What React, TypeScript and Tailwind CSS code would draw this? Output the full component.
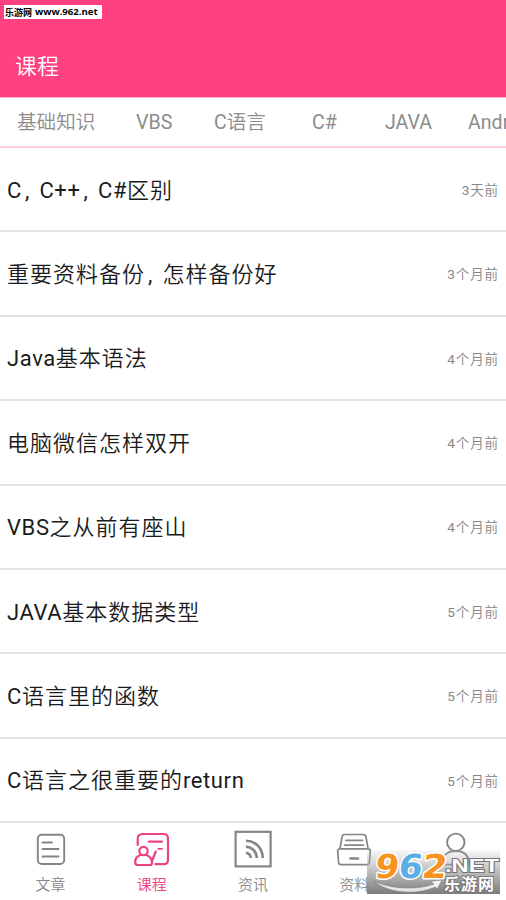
import React from "react";

const tabs = [
  { name: "基础知识", pos: "ml-[17px] w-[119px]" },
  { name: "VBS", pos: "w-[78px]" },
  { name: "C语言", pos: "w-[98px]" },
  { name: "C#", pos: "w-[73px]" },
  { name: "JAVA", pos: "w-[83px]" },
  { name: "Android", pos: "w-[80px]" },
];

const lessons = [
  ["C，C++，C#区别", "3天前"],
  ["重要资料备份，怎样备份好", "3个月前"],
  ["Java基本语法", "4个月前"],
  ["电脑微信怎样双开", "4个月前"],
  ["VBS之从前有座山", "4个月前"],
  ["JAVA基本数据类型", "5个月前"],
  ["C语言里的函数", "5个月前"],
  ["C语言之很重要的return", "5个月前"],
];

/* Latin runs use the regular weight, Chinese runs a slightly lighter one. */
function Mixed({ text }: { text: string }) {
  const parts = text.match(/[A-Za-z0-9#]+|[^A-Za-z0-9#]+/g) ?? [];
  return (
    <>
      {parts.map((part, i) => (
        <span key={i} className={/^[A-Za-z0-9#]/.test(part) ? "font-normal" : "font-[350]"}>{part}</span>
      ))}
    </>
  );
}

function Title({ text }: { text: string }) {
  const parts = text.match(/，|[A-Za-z+#]+|[^A-Za-z+#，]+/g) ?? [];
  return (
    <span className="flex items-baseline whitespace-nowrap pt-[3px] text-[22px] leading-8 text-[#1b1b1b]">
      {parts.map((part, i) =>
        part === "，" ? (
          <span key={i} className="w-[17.5px] pl-[3px]">,</span>
        ) : /^[A-Za-z+#]/.test(part) ? (
          <span key={i} className="tracking-[0.6px]">{part}</span>
        ) : (
          <span key={i} className="font-[350] tracking-[1px]">{part}</span>
        ),
      )}
    </span>
  );
}

function ArticleIcon() {
  return (
    <svg width="38" height="38" viewBox="0 0 38 38" fill="none" stroke="#858585" strokeWidth="1.9" strokeLinecap="round">
      <rect x="5.8" y="4.8" width="26.4" height="29.2" rx="4" />
      <path d="M10.5 12.5H20M10.5 19H26.5M10.5 26.5H26.5" />
    </svg>
  );
}

function CourseIcon() {
  return (
    <svg width="38" height="38" viewBox="0 0 38 38" fill="none" stroke="#ed4185" strokeWidth="2.2" strokeLinecap="round">
      <path d="M4.7 15V9Q4.7 4 9.5 4H30.5Q35 4 35 8.5V30Q35 34.2 30.5 34.2H22.5" />
      <path d="M15.8 11.6H29" />
      <path d="M25.2 18.8H29" strokeWidth="1.8" />
      <path d="M22.8 21.5L19 31" />
      <circle cx="10.5" cy="21" r="4.2" />
      <path d="M7.5 25C3.2 26.5 2 29.5 2.2 32.5Q2.3 35 4.8 35H16.8Q19.2 35 19 32C18.7 28.5 17 26.5 13.5 25" />
    </svg>
  );
}

function FeedIcon() {
  return (
    <svg width="38" height="38" viewBox="0 0 38 38" fill="none" stroke="#858585">
      <rect x="1.6" y="1.8" width="35" height="34.6" strokeWidth="2.2" />
      <path d="M12 10.7C22 11 28.5 18.5 28.8 28M12 16.7C18 17 22.5 21.5 22.8 28M12 22.7Q16.4 23.3 16.8 28" strokeWidth="2.6" />
    </svg>
  );
}

function DrawerIcon() {
  return (
    <svg width="38" height="38" viewBox="0 0 38 38" fill="none" stroke="#858585" strokeWidth="1.7" strokeLinecap="round" strokeLinejoin="round">
      <path d="M5 18.5L7 7Q7.4 4.5 9.5 4.5H28.5Q30.6 4.5 31 7L33 18.5" />
      <path d="M11 10.4H27.5M9.5 15.2H28.5" />
      <path d="M5 18.9H33Q35.5 18.9 35.3 21.3L34.4 32.5Q34.2 34.6 31.7 34.6H6.3Q3.8 34.6 3.6 32.5L2.7 21.3Q2.5 18.9 5 18.9Z" />
      <path d="M15.5 28.4H23" strokeWidth="2.5" />
    </svg>
  );
}

function PersonIcon() {
  return (
    <svg width="38" height="38" viewBox="0 0 38 38" fill="none" stroke="#858585" strokeWidth="1.9" strokeLinecap="round">
      <circle cx="19.8" cy="12.3" r="8.7" />
      <path d="M6 34.6C6 25 12 21 19.8 21S33 25 33 34.6Z" />
    </svg>
  );
}

const navigation = [
  { name: "文章", icon: <ArticleIcon /> },
  { name: "课程", icon: <CourseIcon />, active: true },
  { name: "资讯", icon: <FeedIcon /> },
  { name: "资料", icon: <DrawerIcon /> },
  { name: "我的", icon: <PersonIcon /> },
];

function Watermark() {
  return (
    <div className="absolute bottom-[6px] right-[6px] h-[44px] w-[133px] bg-linear-to-b from-[#bbbbbb]/10 via-[#a8a8a8]/75 via-50% to-[#7c7c7c]">
      <svg className="overflow-visible" width="133" height="44" viewBox="0 0 133 44">
        <defs>
          <linearGradient id="swoosh" x1="0" x2="0" y1="0" y2="1">
            <stop offset="0" stopColor="#ffffff" />
            <stop offset="1" stopColor="#dddddd" />
          </linearGradient>
        </defs>
        <g transform="translate(0 28) skewX(-7)" fontFamily="DejaVu Sans, sans-serif" fontWeight="700" fontSize="33" stroke="#fff" strokeWidth="3" paintOrder="stroke" strokeLinejoin="round">
          <text x="7" y="0" fill="#f7941e" textLength="24" lengthAdjust="spacingAndGlyphs">9</text>
          <text x="30.5" y="0" fill="#5aaee3" textLength="24" lengthAdjust="spacingAndGlyphs">6</text>
          <text x="54" y="0" fill="#f7941e" textLength="25" lengthAdjust="spacingAndGlyphs">2</text>
        </g>
        <path d="M7 31C20 38 48 41 67 34L63 31.5L75 30L70 39.5L68.5 37C48 46 20 43 7 31Z" fill="url(#swoosh)" stroke="#777" strokeWidth="0.6" />
        <g fill="#fff" stroke="#777" strokeWidth="2" paintOrder="stroke" fontWeight="700">
          <text x="78" y="22" fontSize="19" fontFamily="Liberation Sans, sans-serif" textLength="54" lengthAdjust="spacingAndGlyphs">.NET</text>
          <text x="77" y="40" fontSize="16" fontFamily="Noto Sans CJK SC, sans-serif" textLength="50">乐游网</text>
        </g>
      </svg>
    </div>
  );
}

export default function App() {
  return (
    <main className="relative flex h-[900px] w-[506px] flex-col overflow-hidden bg-white font-['Roboto','Noto_Sans_CJK_SC',sans-serif]">
      <header className="flex h-[97px] shrink-0 flex-col bg-[#ff4081]">
        <div className="ml-1 mt-[5px] flex h-[14px] w-[98px] items-center whitespace-nowrap bg-white pl-px pt-px font-['Noto_Sans','Noto_Sans_CJK_SC',sans-serif] text-[9px] font-bold text-black">
          <span className="w-[30px]">乐游网</span>
          <span className="font-['Open_Sans',sans-serif] text-[9.6px]">www.962.net</span>
        </div>
        <h1 className="ml-[15px] mt-[32px] text-[22px] font-[350] leading-8 text-white">课程</h1>
      </header>
      <nav className="flex h-[51px] shrink-0 items-center overflow-hidden border-b-2 border-t border-b-[#ffcddc] border-t-[#ffb3cb] text-[19.6px] text-[#8c8c8c]">
        {tabs.map((tab) => (
          <a key={tab.name} className={`shrink-0 whitespace-nowrap pt-0.5 ${tab.pos}`}>
            <Mixed text={tab.name} />
          </a>
        ))}
      </nav>
      <section className="grid h-[675px] shrink-0 grid-rows-8">
        {lessons.map(([title, date]) => (
          <article key={title} className="flex items-center justify-between border-b-2 border-[#e2e2e2] pl-[7px] pr-[7px]">
            <Title text={title} />
            <time className="pt-0.5 text-[13.6px] tracking-[0.8px] text-[#858585]"><Mixed text={date} /></time>
          </article>
        ))}
      </section>
      <footer className="grid h-[77px] grid-cols-5 bg-white pt-[7px]">
        {navigation.map((item) => (
          <a key={item.name} className={`flex flex-col items-center text-[15px] font-[350] leading-5 ${item.active ? "text-[#ed4185]" : "text-[#8a8a8a]"}`}>
            {item.icon}
            <span className="mt-[7px]">{item.name}</span>
          </a>
        ))}
      </footer>
      <Watermark />
    </main>
  );
}
